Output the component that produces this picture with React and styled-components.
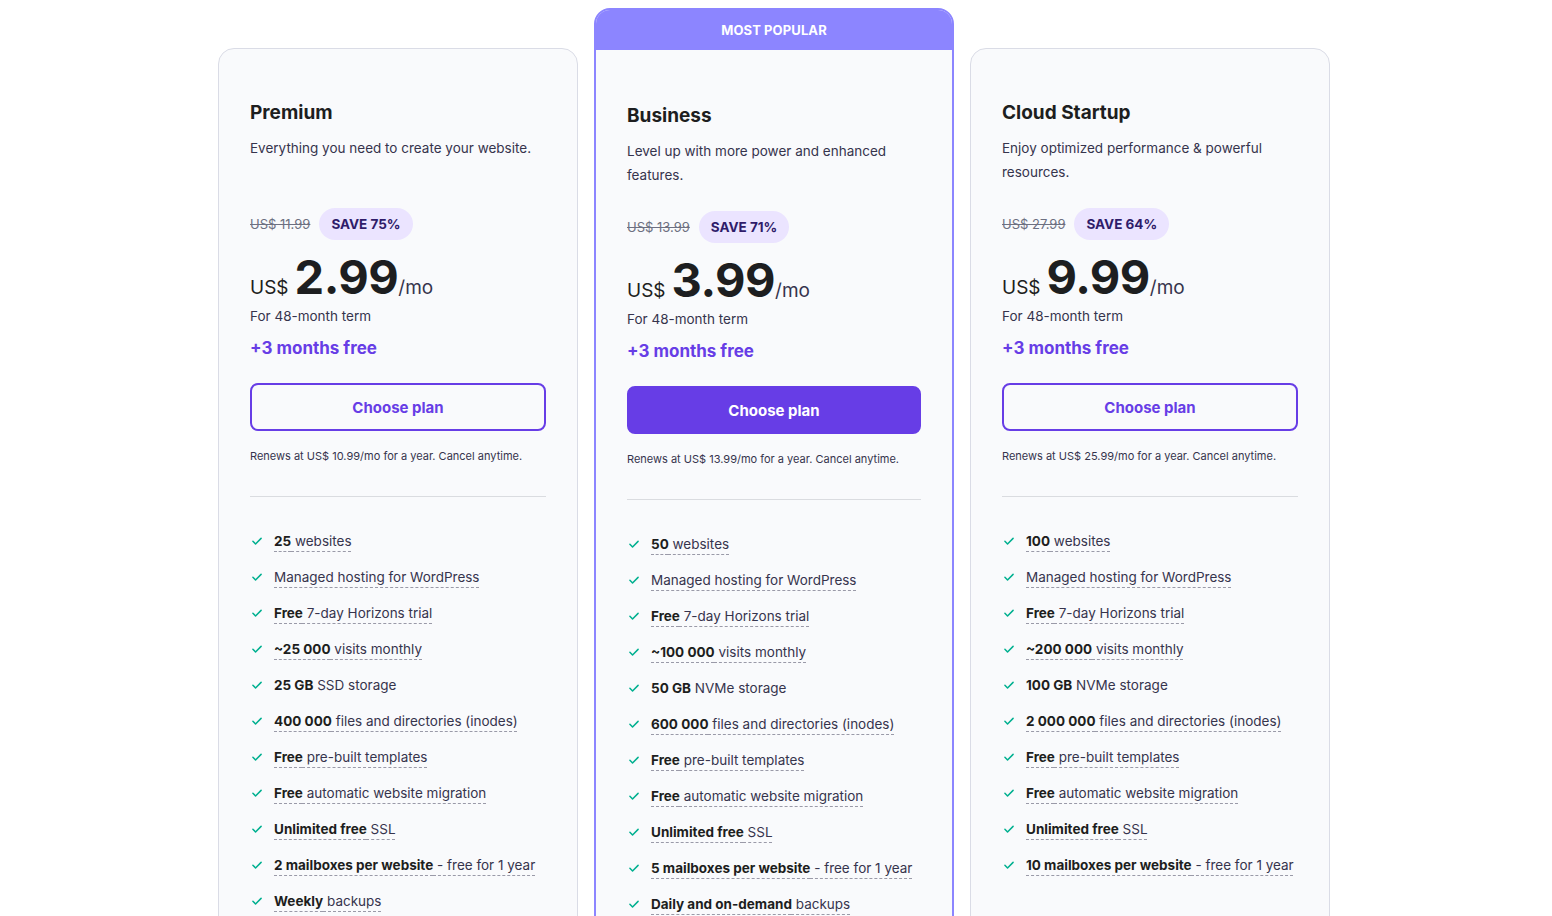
import React from "react";
import styled, { createGlobalStyle } from "styled-components";

const Global = createGlobalStyle`
  body { margin: 0; background: #fff; font-family: Inter, "Noto Sans", sans-serif; color: #1d1e20; }
`;

const Row = styled.div`
  display: flex; justify-content: center; gap: 16px; padding: 8px 4px 0 0; align-items: flex-start;
`;
const Card = styled.div`
  width: 360px; box-sizing: border-box;
  margin-top: ${p => (p.$popular ? "0" : "40px")};
  background: #f9fafc;
  border: ${p => (p.$popular ? "2px solid #8c85ff" : "1px solid #dadce6")};
  border-radius: 16px;
  overflow: hidden;
  height: ${p => (p.$popular ? "930px" : "890px")};
`;
const Banner = styled.div`
  background: #8c85ff; color: #fff; height: 40px; display: flex; align-items: center; justify-content: center;
  font-size: 13px; font-weight: 700; letter-spacing: 0.1px;
`;
const Body = styled.div`
  padding: ${p => (p.$popular ? "53px" : "51px")} 31px 0 31px;
`;
const Title = styled.h2`
  margin: 0; font-size: 19px; font-weight: 700; line-height: 26px;
`;
const Desc = styled.p`
  margin: 10px 0 0; font-size: 13.5px; line-height: 24px; color: #36344d; height: 72px;
`;
const PriceTop = styled.div`
  display: flex; align-items: center; gap: 9px;
`;
const Old = styled.span`
  text-decoration: line-through; font-size: 13px; color: #6d7081;
`;
const Save = styled.span`
  background: #ebe4ff; border-radius: 16px; padding: 0 12px; height: 32px; display: flex; align-items: center;
  font-size: 13.5px; font-weight: 700; color: #2f1c6a;
`;
const Price = styled.div`
  display: flex; align-items: baseline; margin-top: 4px; height: 62px; padding-top: 4px; box-sizing: border-box;
`;
const Cur = styled.span` font-size: 19px; margin-right: 6px; `;
const Big = styled.span` font-size: 47px; font-weight: 700; letter-spacing: -0.5px; `;
const Mo = styled.span` font-size: 19px; color: #36344d; `;
const Term = styled.div` font-size: 13.5px; color: #36344d; line-height: 20px; `;
const Free = styled.div` font-size: 17px; font-weight: 700; color: #673de6; margin-top: 10px; line-height: 24px; `;
const Btn = styled.button`
  width: 100%; height: 48px; margin-top: 23px; border-radius: 8px; font-family: inherit;
  font-size: 15px; font-weight: 700; cursor: pointer;
  background: ${p => (p.$fill ? "#673de6" : "transparent")};
  color: ${p => (p.$fill ? "#fff" : "#673de6")};
  border: 2px solid #673de6;
`;
const Renew = styled.div` font-size: 11px; color: #36344d; margin-top: 17px; line-height: 16px; `;
const Hr = styled.hr` border: 0; border-top: 1px solid #dadce0; margin: 32px 0 26px; `;
const List = styled.ul` list-style: none; margin: 0; padding: 0; `;
const Item = styled.li`
  display: flex; align-items: center; gap: 10px; min-height: 36px; font-size: 13.5px; color: #36344d;
`;
const Txt = styled.span`
  line-height: 24px;
  ${p => p.$u && "text-decoration: underline dashed #9a9aa8; text-underline-offset: 5px; text-decoration-thickness: 1px;"}
  b { color: #1d1e20; font-weight: 700; }
`;

const Check = () => (
  <svg width="14" height="14" viewBox="0 0 24 24" fill="none" stroke="#00b090" strokeWidth="2.6" strokeLinecap="round" strokeLinejoin="round" style={{ flexShrink: 0 }}>
    <path d="M5 12.5l4.5 4.5L19 7.5" />
  </svg>
);

const plans = [
  { name: "Premium", desc: "Everything you need to create your website.", old: "US$ 11.99", save: "SAVE 75%", price: "2.99", renew: "10.99",
    f: [["25", " websites"], ["", "Managed hosting for WordPress"], ["Free", " 7-day Horizons trial"], ["~25 000", " visits monthly"], ["25 GB", " SSD storage", 1], ["400 000", " files and directories (inodes)"], ["Free", " pre-built templates"], ["Free", " automatic website migration"], ["Unlimited free", " SSL"], ["2 mailboxes per website", " - free for 1 year"], ["Weekly", " backups"]] },
  { name: "Business", popular: true, desc: "Level up with more power and enhanced features.", old: "US$ 13.99", save: "SAVE 71%", price: "3.99", renew: "13.99",
    f: [["50", " websites"], ["", "Managed hosting for WordPress"], ["Free", " 7-day Horizons trial"], ["~100 000", " visits monthly"], ["50 GB", " NVMe storage", 1], ["600 000", " files and directories (inodes)"], ["Free", " pre-built templates"], ["Free", " automatic website migration"], ["Unlimited free", " SSL"], ["5 mailboxes per website", " - free for 1 year"], ["Daily and on-demand", " backups"]] },
  { name: "Cloud Startup", desc: "Enjoy optimized performance & powerful resources.", old: "US$ 27.99", save: "SAVE 64%", price: "9.99", renew: "25.99",
    f: [["100", " websites"], ["", "Managed hosting for WordPress"], ["Free", " 7-day Horizons trial"], ["~200 000", " visits monthly"], ["100 GB", " NVMe storage", 1], ["2 000 000", " files and directories (inodes)"], ["Free", " pre-built templates"], ["Free", " automatic website migration"], ["Unlimited free", " SSL"], ["10 mailboxes per website", " - free for 1 year"]] },
];

export default function App() {
  return (
    <>
      <Global />
      <Row>
        {plans.map(p => (
          <Card key={p.name} $popular={p.popular}>
            {p.popular && <Banner>MOST POPULAR</Banner>}
            <Body $popular={p.popular}>
              <Title>{p.name}</Title>
              <Desc>{p.desc}</Desc>
              <PriceTop><Old>{p.old}</Old><Save>{p.save}</Save></PriceTop>
              <Price><Cur>US$</Cur><Big>{p.price}</Big><Mo>/mo</Mo></Price>
              <Term>For 48-month term</Term>
              <Free>+3 months free</Free>
              <Btn $fill={p.popular}>Choose plan</Btn>
              <Renew>Renews at US$ {p.renew}/mo for a year. Cancel anytime.</Renew>
              <Hr />
              <List>
                {p.f.map(([b, t, nu], i) => (
                  <Item key={i}><Check /><Txt $u={!nu}>{b && <b>{b}</b>}{t}</Txt></Item>
                ))}
              </List>
            </Body>
          </Card>
        ))}
      </Row>
    </>
  );
}
